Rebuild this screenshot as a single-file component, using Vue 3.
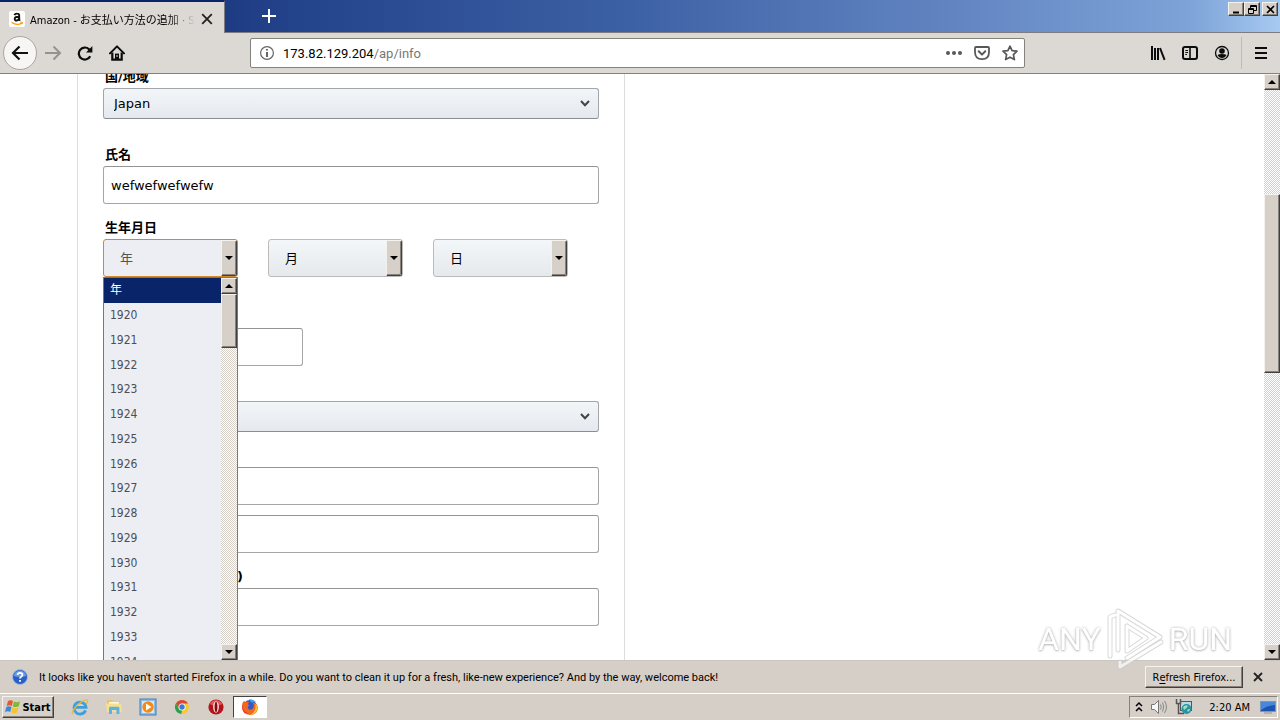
<template>
  <div class="window">
    <header class="titlebar">
      <div class="tab">
        <svg class="favicon" viewBox="0 0 16 16">
          <rect width="16" height="16" rx="2" fill="#fff" />
          <path d="M5.4 4.2Q6.2 2.4 8.2 2.6Q10.2 2.7 10.2 4.6V8.6L11 9.7M10 5.7Q5.7 5.5 5.7 8Q5.8 9.7 7.6 9.5Q9.5 9.2 10 7.4" fill="none" stroke="#111" stroke-width="1.9" />
          <path d="M2.5 11.3Q8 15.2 13 12" fill="none" stroke="#f90" stroke-width="1.3" />
          <path d="M11.3 11.2L13.5 11.3L13 13.2" fill="none" stroke="#f90" />
        </svg>
        <span class="tab-title">Amazon - お支払い方法の追加 · Sign</span>
        <button class="plain tab-close" aria-label="Close tab">
          <svg width="12" height="12" viewBox="0 0 10 10"><path d="M1 1L9 9M9 1L1 9" stroke="#222" stroke-width="1.5" /></svg>
        </button>
      </div>
      <button class="plain new-tab" aria-label="New tab">
        <svg width="14" height="14" viewBox="0 0 14 14"><path d="M7 0V14M0 7H14" stroke="#fff" stroke-width="2" /></svg>
      </button>
      <div class="window-buttons">
        <button class="raised" aria-label="Minimize">
          <svg width="9" height="9" viewBox="0 0 9 9"><path d="M1 7.5H7" stroke="#000" stroke-width="2" /></svg>
        </button>
        <button class="raised" aria-label="Restore">
          <svg width="9" height="9" viewBox="0 0 9 9" fill="none" stroke="#000"><path d="M2.5 3V.5H8.5V5.5H6M2.5 1.5H8.5M.5 3.5H5.5V8.5H.5ZM.5 4.5H5.5" /></svg>
        </button>
        <button class="raised close" aria-label="Close">
          <svg width="9" height="9" viewBox="0 0 9 9"><path d="M1 1L8 8M8 1L1 8" stroke="#000" stroke-width="1.7" /></svg>
        </button>
      </div>
    </header>

    <nav class="toolbar">
      <button class="plain back" aria-label="Back">
        <svg width="18" height="16" viewBox="0 0 18 16"><path d="M17 8H2M8.5 1.5L2 8L8.5 14.5" fill="none" stroke="#111" stroke-width="2.2" /></svg>
      </button>
      <button class="plain nav-button" aria-label="Forward">
        <svg width="18" height="16" viewBox="0 0 18 16"><path d="M1 8H16M9.5 1.5L16 8L9.5 14.5" fill="none" stroke="#96928d" stroke-width="2" /></svg>
      </button>
      <button class="plain nav-button" aria-label="Reload">
        <svg width="16" height="16" viewBox="0 0 16 16"><path d="M13.2 11.2A6 6 0 1 1 12 4.2L13.5 5.7" fill="none" stroke="#0c0c0d" stroke-width="2.2" /><path d="M15.4 1V7.4H9Z" fill="#0c0c0d" /></svg>
      </button>
      <button class="plain nav-button" aria-label="Home">
        <svg width="16" height="16" viewBox="0 0 16 16"><path d="M1 8.4L8 1.4L15 8.4" fill="none" stroke="#0c0c0d" stroke-width="2" stroke-linecap="round" stroke-linejoin="round" /><path d="M3.3 7.5V14.6H12.7V7.5" fill="none" stroke="#0c0c0d" stroke-width="2.2" /><path d="M6 14.5V8.6H10V14.5" fill="#0c0c0d" /><path d="M8 10V12" stroke="#ddd" /></svg>
      </button>
      <div class="address">
        <svg width="16" height="16" viewBox="0 0 16 16"><circle cx="8" cy="8" r="6.4" fill="none" stroke="#666" stroke-width="1.2" /><path d="M8 7V12M8 4V5.6" stroke="#555" stroke-width="1.8" /></svg>
        <span class="url">173.82.129.204<i>/ap/info</i></span>
        <button class="plain" aria-label="Page actions">
          <svg width="16" height="16" viewBox="0 0 16 16" fill="#58585a"><circle cx="2" cy="8" r="2" /><circle cx="8" cy="8" r="2" /><circle cx="14" cy="8" r="2" /></svg>
        </button>
        <button class="plain" aria-label="Save to Pocket">
          <svg width="16" height="16" viewBox="0 0 16 16" fill="none" stroke="#58585a" stroke-linecap="round" stroke-linejoin="round"><path d="M2 2H14Q15 2 15 3V7Q15 14.2 8 14.2T1 7V3Q1 2 2 2Z" stroke-width="1.8" /><path d="M4.7 6.3L8 9.6L11.3 6.3" stroke-width="2" /></svg>
        </button>
        <button class="plain" aria-label="Bookmark this page">
          <svg width="16" height="16" viewBox="0 0 16 16"><path d="M8 1.2L10.1 5.6L15 6.2L11.4 9.6L12.4 14.6L8 12.2L3.6 14.6L4.6 9.6L1 6.2L5.9 5.6Z" fill="none" stroke="#58585a" stroke-width="1.7" stroke-linejoin="round" /></svg>
        </button>
      </div>
      <div class="tools">
        <button class="plain" aria-label="Library">
          <svg width="16" height="16" viewBox="0 0 16 16"><path d="M2 1V15M5 3V15M8 3V15M10 3L14.6 14.8" stroke="#0c0c0d" stroke-width="2" /></svg>
        </button>
        <button class="plain" aria-label="Sidebars">
          <svg width="16" height="16" viewBox="0 0 16 16" fill="none" stroke="#0c0c0d"><rect x="1" y="2" width="14" height="12" rx="2" stroke-width="2" /><path d="M8 2V14" stroke-width="1.6" /><path d="M3.3 5.5H6M3.3 7.5H6M3.3 9.5H5" /></svg>
        </button>
        <button class="plain" aria-label="Account">
          <svg width="16" height="16" viewBox="0 0 16 16"><circle cx="8" cy="8" r="6.5" fill="none" stroke="#0c0c0d" stroke-width="1.3" /><circle cx="8" cy="6" r="2.8" fill="#0c0c0d" /><path d="M3.5 10Q5 9 8 9T12.5 10Q11 13 8 13T3.5 10Z" fill="#0c0c0d" /></svg>
        </button>
      </div>
      <button class="plain menu" aria-label="Menu">
        <svg width="12" height="12" viewBox="0 0 12 12"><path d="M0 1H12M0 6H12M0 11H12" stroke="#0c0c0d" stroke-width="2" /></svg>
      </button>
    </nav>

    <main class="viewport">
      <div class="page">
        <form class="card" @submit.prevent>
          <div class="field spaced">
            <label for="country">国/地域</label>
            <div class="dropdown">
              <select id="country" v-model="form.country">
                <option>Japan</option>
              </select>
              <svg width="10" height="7" viewBox="0 0 10 7"><path d="M1 1L5 5.2L9 1" fill="none" stroke="#444" stroke-width="2" /></svg>
            </div>
          </div>

          <div class="field">
            <label for="name">氏名</label>
            <input id="name" v-model="form.name" type="text" />
          </div>

          <div class="field birthday">
            <label for="year">生年月日</label>
            <div class="dates">
              <div v-for="part in dateParts" :key="part.id" class="date" :class="{ active: part.open }">
                <select :id="part.id" :aria-label="part.text">
                  <option>{{ part.text }}</option>
                </select>
                <span class="raised date-arrow"><i class="arrow down"></i></span>
                <div v-if="part.open" class="popup">
                  <ul role="listbox">
                    <li
                      v-for="year in years"
                      :key="year"
                      role="option"
                      :aria-selected="year === selectedYear"
                      :class="{ selected: year === selectedYear }"
                      @click="selectedYear = year"
                    >
                      {{ year }}
                    </li>
                  </ul>
                  <div class="scrollbar">
                    <span class="raised scroll-button"><i class="arrow up"></i></span>
                    <span class="raised thumb"></span>
                    <span class="raised scroll-button last"><i class="arrow down"></i></span>
                  </div>
                </div>
              </div>
            </div>
          </div>

          <div class="field">
            <label for="zip">郵便番号</label>
            <input id="zip" v-model="form.zip" class="short" type="text" />
          </div>

          <div class="field">
            <label for="state">都道府県</label>
            <div class="dropdown">
              <select id="state" v-model="form.state">
                <option></option>
              </select>
              <svg width="10" height="7" viewBox="0 0 10 7"><path d="M1 1L5 5.2L9 1" fill="none" stroke="#444" stroke-width="2" /></svg>
            </div>
          </div>

          <div class="field">
            <label for="address1">住所</label>
            <input id="address1" v-model="form.address1" type="text" />
            <input v-model="form.address2" class="second" type="text" aria-label="住所 2" />
          </div>

          <div class="field">
            <label for="phone">電話番号 (半角の数字 )</label>
            <input id="phone" v-model="form.phone" type="text" />
          </div>
        </form>
      </div>

      <div class="scrollbar page-scroll">
        <span class="raised scroll-button"><i class="arrow up"></i></span>
        <span class="above"></span>
        <span class="raised thumb"></span>
        <span class="below"></span>
        <span class="raised scroll-button"><i class="arrow down"></i></span>
      </div>
    </main>

    <div class="notification">
      <svg width="16" height="16" viewBox="0 0 16 16"><circle cx="8" cy="8" r="7.5" fill="#2c5fc4" stroke="#9db8e0" /><path d="M2 7A6 5.4 0 0 1 14 7Q8 9 2 7Z" fill="#6f9be6" /><path d="M5.6 6Q5.7 3.8 8 3.8T10.4 5.8Q10.4 7 8.9 7.9Q8 8.5 8 9.6M8 11V12.8" fill="none" stroke="#fff" stroke-width="1.8" /></svg>
      <p>It looks like you haven't started Firefox in a while. Do you want to clean it up for a fresh, like-new experience? And by the way, welcome back!</p>
      <button class="raised refresh">R<u>e</u>fresh Firefox...</button>
      <button class="plain dismiss" aria-label="Dismiss">
        <svg width="10" height="10" viewBox="0 0 10 10"><path d="M1 1L9 9M9 1L1 9" stroke="#222" stroke-width="1.8" /></svg>
      </button>
    </div>

    <footer class="taskbar">
      <button class="raised start">
        <svg width="16" height="16" viewBox="0 0 16 16">
          <path d="M3 2Q5.5 .5 8 2L6.8 7Q4.4 5.6 1.7 7Z" fill="#e8562a" />
          <path d="M9 2.5Q12 4 15 2.3L13.7 7.3Q11 8.8 7.8 7.4Z" fill="#7fb837" />
          <path d="M1.4 8Q4 6.7 6.5 8.1L5.2 13Q3 11.6 0 13Z" fill="#3b86d6" />
          <path d="M7.5 8.5Q10.5 10 13.4 8.4L12 13.4Q9 15 6.2 13.5Z" fill="#f7c32c" />
        </svg>
        Start
      </button>
      <div class="apps">
        <button class="plain" aria-label="Internet Explorer">
          <svg width="18" height="18" viewBox="0 0 18 18" fill="none"><path d="M14.6 12.4A6 6 0 1 1 15 9.3H4.5" stroke="#3c9fdf" stroke-width="2.8" /><path d="M2.2 15.8Q-.7 15 5.5 7.8Q13 .6 16.3 2Q17.5 3.2 15.3 6" stroke="#e9b93a" stroke-width="1.3" /></svg>
        </button>
        <button class="plain" aria-label="Explorer">
          <svg width="18" height="18" viewBox="0 0 18 18"><path d="M2 2H7L8.5 3.5H15V14H2Z" fill="#e8c566" /><path d="M4 4H14V9H4Z" fill="#fff8d9" /><path d="M1 5.5H16L17 14H2Z" fill="#f5df91" /><path d="M4 16V10Q4 8.7 5.4 8.7H13Q14.4 8.7 14.4 10V16H11.5V12H7V16Z" fill="#5eb2df" /></svg>
        </button>
        <button class="plain" aria-label="Media Player">
          <svg width="18" height="18" viewBox="0 0 18 18"><rect x="1" y="1" width="16" height="16" fill="#8ebce8" stroke="#3e7fbd" /><rect x="3" y="3" width="12" height="12" fill="#d7e9f6" /><circle cx="9" cy="9" r="5.7" fill="#f48a16" /><path d="M7 5.5L12.5 9L7 12.5Z" fill="#fff" /></svg>
        </button>
        <button class="plain" aria-label="Chrome">
          <svg width="18" height="18" viewBox="0 0 18 18"><circle cx="9" cy="9" r="7" fill="#f6ca2f" /><path d="M2.9 5.5A7 7 0 0 1 15.1 5.5H9L6 10.5Z" fill="#dc4638" /><path d="M2.9 5.5L6 10.8L9 12.5L8.2 16A7 7 0 0 1 2.9 5.5Z" fill="#2b9e50" /><circle cx="9" cy="9" r="3.5" fill="#fff" /><circle cx="9" cy="9" r="2.7" fill="#3979dc" /></svg>
        </button>
        <button class="plain" aria-label="Opera">
          <svg width="18" height="18" viewBox="0 0 18 18"><circle cx="9" cy="9" r="7.6" fill="#b51219" /><path d="M2.5 6Q9-2 15.5 6Q9 9 2.5 6Z" fill="#dc5a5a" /><ellipse cx="9" cy="9" rx="2.8" ry="5.5" fill="#fff" /><ellipse cx="9" cy="9" rx="1.5" ry="5" fill="#8b070d" /></svg>
        </button>
        <button class="plain running" aria-label="Firefox">
          <svg width="18" height="18" viewBox="0 0 18 18"><circle cx="9" cy="9" r="7" fill="#3159c7" /><path d="M8 1.3Q12 .5 15 4Q12 3.2 11 5Z" fill="#36a8e8" /><path d="M1.5 5L3 2.8L4.5 4.5Q6 3.5 8 4L6.8 6.3L8.5 7.5Q6.5 8.3 6.8 10Q8 12.5 11 11.2Q14 9 11.8 4.6Q16 5 17 9Q16.5 17 9 17Q1.2 16.5 1 9Q1 7 1.5 5Z" fill="#f5671d" /><path d="M14.2 5.5Q17 8 16.5 11Q14.5 17 9 16.8Q13 15 14 12T14.2 5.5Z" fill="#ffc52d" /><path d="M1.5 6Q1 14 7.5 15.3Q2 16 1.1 9.5Z" fill="#e22a42" /></svg>
        </button>
      </div>
      <div class="tray">
        <svg width="8" height="12" viewBox="0 0 8 12"><path d="M1 5L4 2L7 5M1 10L4 7L7 10" fill="none" stroke="#000" stroke-width="1.5" /></svg>
        <svg width="18" height="18" viewBox="0 0 18 18" fill="none"><path d="M1.5 6.5H4.5L8.5 2.5V15.5L4.5 11.5H1.5Z" fill="#f6f6f6" stroke="#777" /><path d="M10.5 6.5Q12 9 10.5 11.5M12.5 4.5Q15 9 12.5 13.5M14.5 3Q18.5 9 14.5 15" stroke="#888" /></svg>
        <svg width="18" height="18" viewBox="0 0 18 18"><rect x="5.5" y="3.5" width="11" height="9" fill="#b9d9e6" stroke="#555" /><path d="M1.5 1V5.5H5.5V1M3.5 5.5V15.5H9" fill="none" stroke="#555" stroke-width="1.5" /><circle cx="11.5" cy="11" r="5" fill="#2c91a0" /><path d="M8 9Q11 6 13 8Q12 10 9 12ZM12 12Q15 10 15 12L13 14Z" fill="#9be1c0" /></svg>
        <time>2:20 AM</time>
        <svg width="16" height="14" viewBox="0 0 16 14"><rect x=".5" y="1.5" width="15" height="10" fill="#1d54b0" stroke="#7d96bd" /><path d="M1 2H15V5Q8 5 1 10Z" fill="#4688dd" /><path d="M4 13H12" stroke="#8b9099" /></svg>
      </div>
    </footer>

    <div class="watermark">
      <span>ANY</span>
      <svg width="60" height="64" viewBox="0 0 60 64" fill="none" stroke-linejoin="round" stroke-linecap="round">
        <path d="M5 49V10L10 8M13 43V4L55 30L22 51M22 19V44L41 31L22 19M15 55V60L56 35" stroke="#c9c9c9" stroke-width="5" />
        <path d="M5 49V10L10 8M13 43V4L55 30L22 51M22 19V44L41 31L22 19M15 55V60L56 35" stroke="#fff" stroke-width="3" />
      </svg>
      <span>RUN</span>
    </div>
  </div>
</template>

<script setup>
import { reactive, ref } from "vue";

const form = reactive({
  country: "Japan",
  name: "wefwefwefwefw",
  zip: "",
  state: "",
  address1: "",
  address2: "",
  phone: "",
});

const dateParts = [
  { id: "year", text: "年", open: true },
  { id: "month", text: "月", open: false },
  { id: "day", text: "日", open: false },
];

const years = ["年", ...Array.from({ length: 15 }, (_, i) => 1920 + i)];
const selectedYear = ref("年");
</script>

<style>
body {
  overflow: hidden;
}
</style>

<style scoped>
* {
  box-sizing: border-box;
}

.window {
  position: relative;
  display: flex;
  flex-direction: column;
  height: 100vh;
  font-family: "DejaVu Sans Condensed", "Noto Sans CJK JP", sans-serif;
  font-size: 11px;
  color: #000;
  background: #fff;
}

button,
input,
select {
  margin: 0;
  padding: 0;
  font: inherit;
  color: inherit;
}

svg {
  display: block;
  flex: none;
}

i {
  font-style: normal;
}

.plain {
  display: flex;
  align-items: center;
  justify-content: center;
  border: 0;
  background: none;
}

.raised {
  display: flex;
  align-items: center;
  justify-content: center;
  background: #d6d0c8;
  border: 1px solid;
  border-color: #f4f2ee #404040 #404040 #f4f2ee;
  box-shadow: inset -1px -1px #87827c;
}

.titlebar {
  display: flex;
  flex: none;
  height: 33px;
  border-bottom: 1px solid #7d7d80;
  background: linear-gradient(90deg, #0a246a 0, #203f87 20%, #3e62a6 50%, #6386c2 75%, #7da3d8 93%, #a6caf0 100%);
}

.tab {
  display: flex;
  align-items: center;
  width: 225px;
  height: 33px;
  padding: 2px 11px 0 9px;
  border-top: 2px solid #0a246a;
  border-right: 1px solid #7d7d80;
  background: #dcd8d3;
}

.favicon {
  width: 16px;
  height: 16px;
  margin-right: 5px;
}

.tab-title {
  flex: 1;
  overflow: hidden;
  white-space: nowrap;
  mask-image: linear-gradient(90deg, #000 84%, transparent);
}

.tab-close {
  width: 12px;
  margin-left: 6px;
}

.new-tab {
  width: 32px;
  margin-left: 28px;
}

.window-buttons {
  display: flex;
  margin: 2px 2px 0 auto;
}

.window-buttons button {
  width: 16px;
  height: 14px;
}

.window-buttons .close {
  margin-left: 2px;
}

.toolbar {
  display: flex;
  flex: none;
  align-items: center;
  height: 41px;
  border-bottom: 1px solid #85827e;
  background: #dcd8d3;
}

.back {
  width: 34px;
  height: 34px;
  margin-left: 3px;
  border: 1px solid #a9a6a2;
  border-radius: 50%;
  background: #f7f6f5;
}

.nav-button {
  width: 32px;
  height: 32px;
}

.address {
  display: flex;
  flex: 1;
  align-items: center;
  gap: 12px;
  max-width: 775px;
  height: 30px;
  margin-left: 117px;
  padding: 0 6px 0 8px;
  border: 1px solid #85827e;
  border-radius: 2px;
  background: #fff;
}

.url {
  flex: 1;
  margin-left: -4px;
  font-family: Roboto, sans-serif;
  font-size: 13px;
}

.url i {
  color: #777;
}

.tools {
  display: flex;
  gap: 16px;
  margin-left: auto;
  padding-right: 11px;
}

.menu {
  width: 39px;
  height: 32px;
  border-left: 1px solid #bfbbb6;
}

.viewport {
  display: flex;
  flex: 1;
  min-height: 0;
  overflow: hidden;
}

.page {
  flex: 1;
  min-width: 0;
  font-family: "DejaVu Sans", "Noto Sans CJK JP", sans-serif;
  font-size: 13px;
}

/* scrolled part way down */
.card {
  max-width: 548px;
  min-height: 800px;
  margin: -40px 0 0 77px;
  padding: 33px 25px;
  border: 1px solid #ddd;
}

.field {
  margin-bottom: 15px;
}

.field.spaced {
  margin-bottom: 27px;
}

.field.birthday {
  margin-bottom: 31px;
}

.field label {
  display: block;
  height: 18px;
  margin: 0 0 2px 2px;
  font-weight: bold;
  line-height: 18px;
}

.field input {
  display: block;
  width: 100%;
  height: 38px;
  padding: 0 7px;
  border: 1px solid #a6a6a6;
  border-top-color: #949494;
  border-radius: 3px;
  background: #fff;
  outline: 0;
}

.field input.short {
  max-width: 200px;
}

.field input.second {
  margin-top: 10px;
}

.dropdown {
  position: relative;
}

.dropdown select,
.date select {
  appearance: none;
  width: 100%;
  outline: 0;
}

.dropdown select {
  display: block;
  height: 31px;
  padding: 0 10px;
  border: 1px solid #a2a6ac;
  border-bottom-color: #888c93;
  border-radius: 3px;
  background: linear-gradient(#f3f6f8, #e5e8ee);
}

.dropdown svg {
  position: absolute;
  top: 12px;
  right: 9px;
}

.dates {
  display: flex;
  gap: 30px;
}

.date {
  position: relative;
  width: 135px;
}

.date select {
  display: block;
  height: 38px;
  padding: 0 16px;
  border: 1px solid #bbb;
  border-radius: 3px;
  background: linear-gradient(#f4f7f9, #e6e9eb);
}

.date.active select {
  border-color: #d08a2c;
  color: #555;
  background: #eceef3;
}

.date-arrow {
  position: absolute;
  top: 1px;
  right: 1px;
  width: 16px;
  height: 36px;
  border-radius: 0 2px 2px 0;
  pointer-events: none;
}

.arrow {
  border: 4px solid transparent;
}

.arrow.down {
  border-top-color: #000;
  border-bottom: 0;
}

.arrow.up {
  border-bottom-color: #000;
  border-top: 0;
}

.popup {
  position: absolute;
  z-index: 2;
  top: 38px;
  left: 0;
  display: flex;
  width: 100%;
  height: 384px;
  overflow: hidden;
  border: 1px solid #77787c;
  background: #eceef4;
}

.popup ul {
  display: grid;
  flex: 1;
  grid-template-rows: repeat(16, 1fr);
  height: 396px;
  margin: 0;
  padding: 0;
  list-style: none;
  font-family: "DejaVu Sans Condensed", "Noto Sans CJK JP", sans-serif;
  font-size: 12px;
  line-height: 16px;
  color: #4c4f55;
}

.popup li {
  display: flex;
  align-items: center;
  min-height: 0;
  padding: 0 6px;
}

.popup li.selected {
  color: #fff;
  background: #0a246a;
}

.scrollbar {
  display: flex;
  flex: none;
  flex-direction: column;
  width: 16px;
  background: repeating-conic-gradient(#d6d0c8 0 25%, #fff 0 50%) 0 0 / 2px 2px;
}

.scroll-button {
  flex: none;
  width: 16px;
  height: 16px;
}

.scroll-button.last {
  margin-top: auto;
}

.thumb {
  height: 54px;
}

.page-scroll .above {
  flex: 104;
}

.page-scroll .thumb {
  flex: 178;
}

.page-scroll .below {
  flex: 272;
}

.notification {
  display: flex;
  flex: none;
  align-items: center;
  height: 33px;
  padding: 0 17px 0 12px;
  border-top: 1px solid #cbc6c0;
  background: #d6cfc8;
}

.notification p {
  flex: 1;
  margin: 0 0 0 11px;
  font-family: Roboto, sans-serif;
  white-space: nowrap;
}

.refresh {
  width: 98px;
  height: 22px;
  margin-right: 10px;
}

.refresh u {
  text-underline-offset: 2px;
}

.taskbar {
  display: flex;
  flex: none;
  align-items: center;
  height: 27px;
  padding: 1px 2px;
  border-top: 1px solid #fff;
  background: #d6cfc8;
}

.start {
  gap: 1px;
  width: 52px;
  height: 22px;
  font-size: 11px;
  font-weight: bold;
}

.apps {
  display: flex;
  margin-left: 9px;
}

.apps button {
  width: 34px;
  height: 22px;
}

.apps .running {
  border: 1px solid;
  border-color: #444 #fff #fff #444;
  background: #fff;
}

.tray {
  display: flex;
  align-items: center;
  gap: 7px;
  height: 22px;
  margin-left: auto;
  padding: 0 1px 0 5px;
  border: 1px solid;
  border-color: #85827e #fff #fff #85827e;
}

.tray time {
  margin: 0 3px 0 9px;
}

.watermark {
  position: absolute;
  z-index: 3;
  right: 48px;
  bottom: 49px;
  display: flex;
  align-items: center;
  gap: 4px;
  font-family: Roboto, sans-serif;
  font-size: 32px;
  color: #fff;
  text-shadow: 0 0 3px #999, 0 1px 2px #aaa;
  opacity: 0.7;
  pointer-events: none;
}
</style>
